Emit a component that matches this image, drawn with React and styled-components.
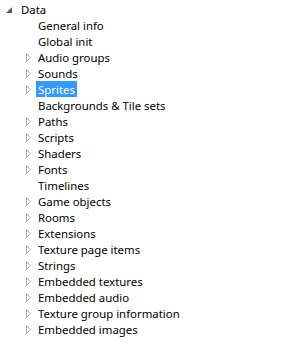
import React from "react";
import styled, { createGlobalStyle } from "styled-components";

const Global = createGlobalStyle`
  html, body { margin: 0; padding: 0; background: #fff; }
  body { font-family: "Noto Sans", "Open Sans", sans-serif; font-size: 11.4px; color: #000; }
`;

const Tree = styled.ul`
  list-style: none;
  margin: 0;
  padding: 1px 0 0 0;
`;

const Children = styled.ul`
  list-style: none;
  margin: 0;
  padding: 0;
`;

const Row = styled.div`
  display: flex;
  align-items: center;
  height: 16px;
  padding-left: ${(p) => p.$depth * 17 + 2}px;
`;

const Expander = styled.span`
  position: relative;
  width: 16px;
  height: 16px;
  flex: none;
  svg { position: absolute; left: ${(p) => (p.$open ? 4 : 7)}px; top: ${(p) => (p.$open ? 6 : 4)}px; }
`;

const Label = styled.span`
  display: block;
  box-sizing: border-box;
  margin-left: 1px;
  padding: 1px 2px 0;
  height: 16px;
  line-height: 16px;
  white-space: nowrap;
  background: ${(p) => (p.$selected ? "#3399ff" : "transparent")};
  color: ${(p) => (p.$selected ? "#fff" : "#000")};
`;

const OpenArrow = () => (
  <svg width="6" height="6" viewBox="0 0 6 6">
    <polygon points="6,0 6,6 0,6" fill="#595959" />
  </svg>
);

const ClosedArrow = () => (
  <svg width="5" height="9" viewBox="0 0 5 9">
    <polygon points="0.5,0.5 4.5,4.5 0.5,8.5" fill="none" stroke="#a6a6a6" strokeWidth="1" />
  </svg>
);

const items = [
  ["General info", false],
  ["Global init", false],
  ["Audio groups", true],
  ["Sounds", true],
  ["Sprites", true, true],
  ["Backgrounds & Tile sets", false],
  ["Paths", true],
  ["Scripts", true],
  ["Shaders", true],
  ["Fonts", true],
  ["Timelines", false],
  ["Game objects", true],
  ["Rooms", true],
  ["Extensions", true],
  ["Texture page items", true],
  ["Strings", true],
  ["Embedded textures", true],
  ["Embedded audio", true],
  ["Texture group information", true],
  ["Embedded images", true],
];

export default function App() {
  return (
    <>
      <Global />
      <Tree>
        <li>
          <Row $depth={0}>
            <Expander $open>
              <OpenArrow />
            </Expander>
            <Label>Data</Label>
          </Row>
          <Children>
            {items.map(([name, hasKids, sel]) => (
              <li key={name}>
                <Row $depth={1}>
                  <Expander>{hasKids && <ClosedArrow />}</Expander>
                  <Label $selected={sel}>{name}</Label>
                </Row>
              </li>
            ))}
          </Children>
        </li>
      </Tree>
    </>
  );
}
